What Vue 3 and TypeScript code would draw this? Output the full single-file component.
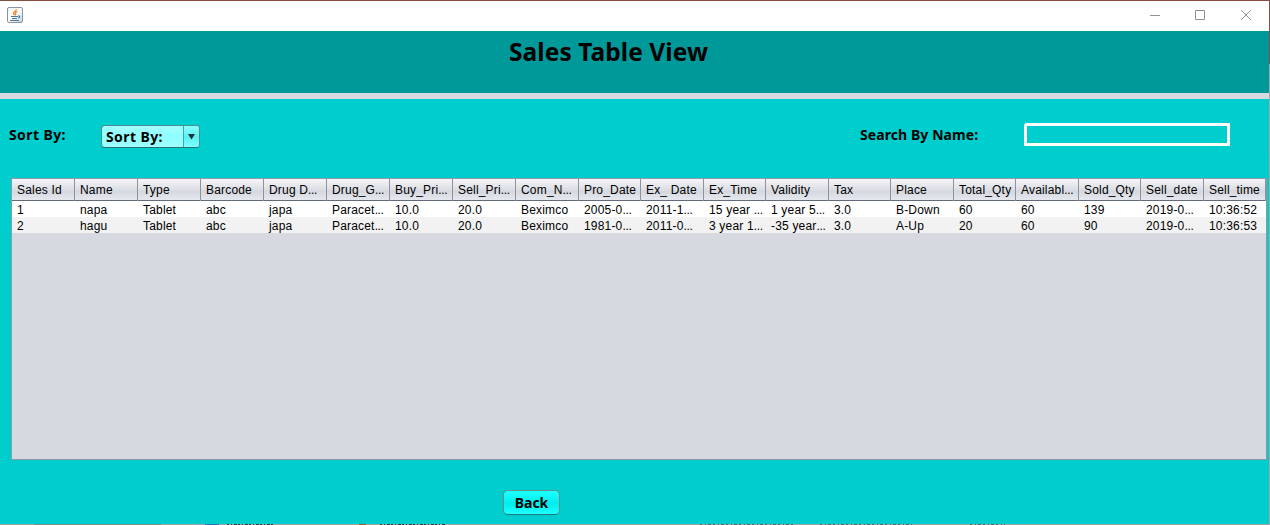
<script setup lang="ts">
interface Column {
  title: string
  width: number
  cells: [string, string]
}

const columns: Column[] = [
  { title: 'Sales Id', width: 63, cells: ['1', '2'] },
  { title: 'Name', width: 63, cells: ['napa', 'hagu'] },
  { title: 'Type', width: 63, cells: ['Tablet', 'Tablet'] },
  { title: 'Barcode', width: 63, cells: ['abc', 'abc'] },
  { title: 'Drug D...', width: 63, cells: ['japa', 'japa'] },
  { title: 'Drug_G...', width: 63, cells: ['Paracet...', 'Paracet...'] },
  { title: 'Buy_Pri...', width: 63, cells: ['10.0', '10.0'] },
  { title: 'Sell_Pri...', width: 63, cells: ['20.0', '20.0'] },
  { title: 'Com_N...', width: 63, cells: ['Beximco', 'Beximco'] },
  { title: 'Pro_Date', width: 62, cells: ['2005-0...', '1981-0...'] },
  { title: 'Ex_ Date', width: 63, cells: ['2011-1...', '2011-0...'] },
  { title: 'Ex_Time', width: 62, cells: ['15 year ...', '3 year 1...'] },
  { title: 'Validity', width: 63, cells: ['1 year 5...', '-35 year...'] },
  { title: 'Tax', width: 62, cells: ['3.0', '3.0'] },
  { title: 'Place', width: 63, cells: ['B-Down', 'A-Up'] },
  { title: 'Total_Qty', width: 62, cells: ['60', '20'] },
  { title: 'Availabl...', width: 63, cells: ['60', '60'] },
  { title: 'Sold_Qty', width: 62, cells: ['139', '90'] },
  { title: 'Sell_date', width: 63, cells: ['2019-0...', '2019-0...'] },
  { title: 'Sell_time', width: 62, cells: ['10:36:52', '10:36:53'] },
]

const tracks = columns.map((c) => `${c.width}px`).join(' ')

const stem = (text: string): string => text.replace(/\.\.\.$/, '')
const dots = (text: string): string => (text.endsWith('...') ? '...' : '')
</script>

<template>
  <div class="window">
    <header class="titlebar">
      <svg class="java" width="16" height="16" viewBox="0 0 16 16">
        <defs>
          <linearGradient id="tile" x1="0" y1="0" x2="1" y2="1">
            <stop offset="0" stop-color="#f2f5f7" />
            <stop offset=".5" stop-color="#fff" />
            <stop offset="1" stop-color="#c3ced6" />
          </linearGradient>
        </defs>
        <rect x=".5" y=".5" width="15" height="15" rx="1.5" fill="url(#tile)" stroke="#8296a5" />
        <path d="M9.200 2.300C9.800 4.200 6.200 4.700 6.500 6.400c.1.800.7 1.100 1 1.900M10.600 4.500C8.900 5 8 5.800 8.600 6.800c.4.700.2 1.100-.3 1.500" fill="none" stroke="#ec8426" stroke-width="1.300" />
        <path d="M4 9.500h7M5 11.500h5M3 13.500h9M11 9c2.300-.4 2.300 1.600.2 2" fill="none" stroke="#4c7593" stroke-width="1.100" />
      </svg>
      <svg class="controls" width="102" height="12" viewBox="0 0 102 12" fill="none" stroke="#929292">
        <path d="M0 6.500h10M45.500 1.500h9v9h-9z" />
        <path d="M91 1l10 10M101 1L91 11" />
      </svg>
    </header>
    <div class="banner"><h1>Sales Table View</h1></div>
    <div class="divider"></div>
    <main class="content">
      <div class="filters">
        <span class="label sort">Sort By:</span>
        <div class="combo">
          <span class="value">Sort By:</span>
          <span class="arrow"><svg width="7" height="6" viewBox="0 0 7 6"><path d="M0 0h7L3.500 5.500z" fill="#173238" /></svg></span>
        </div>
        <span class="label search">Search By Name:</span>
        <input class="field" type="text" />
      </div>
      <div class="table">
        <div class="row head" :style="{ gridTemplateColumns: tracks }">
          <span v-for="c in columns" :key="c.title">{{ stem(c.title) }}<i>{{ dots(c.title) }}</i></span>
        </div>
        <div v-for="r in [0, 1]" :key="r" class="row body" :style="{ gridTemplateColumns: tracks }">
          <span v-for="c in columns" :key="c.title">{{ stem(c.cells[r]) }}<i>{{ dots(c.cells[r]) }}</i></span>
        </div>
      </div>
      <button class="back">Back</button>
    </main>
    <svg class="edge" width="1270" height="1" viewBox="0 0 1270 1" stroke-width="1">
      <path d="M34 .5h127" stroke="#858a88" />
      <path d="M205 .5h14" stroke="#2377ae" />
      <path d="M359 .5h7" stroke="#a5533c" />
      <path d="M227 .5h48M380 .5h66" stroke="#35383a" stroke-dasharray="2 2 1 2 3 1" />
      <path d="M700 .5h96M820 .5h92M970 .5h35" stroke="#4f6264" stroke-dasharray="2 3 1 2 3 2" />
    </svg>
  </div>
</template>

<style>
body {
  margin: 0;
  overflow: hidden;
}
</style>

<style scoped>
.window {
  position: relative;
  box-sizing: border-box;
  width: 1270px;
  height: 525px;
  border-top: 1px solid #8a5145;
  border-right: 1px solid #9b9c9b;
  border-bottom: 1px solid #a5a5a3;
  border-image: linear-gradient(#884e42 0 64px, #9eaaad 64px 150px, #a5a5a3 150px) 1;
  border-left: 0;
  background: #00cdcd;
  font-family: "Noto Sans", sans-serif;
  color: #000;
}
.titlebar {
  display: flex;
  justify-content: space-between;
  height: 30px;
  background: #fff;
}
.java {
  margin: 6px 0 0 7px;
}
.controls {
  margin: 8px 17px 0 0;
}
.banner {
  height: 62px;
  background: #009999;
}
h1 {
  margin: 0;
  padding: 4px 0 0 509px;
  font-size: 24.5px;
  line-height: 34px;
  font-weight: 700;
  letter-spacing: 0.08px;
  white-space: nowrap;
}
.divider {
  height: 6px;
  background: #d6d9e0;
}
.filters {
  display: flex;
  align-items: flex-start;
  height: 79px;
}
.label {
  padding-top: 26px;
  font-size: 14px;
  font-weight: 700;
  line-height: 20px;
  white-space: nowrap;
}
.sort {
  width: 92px;
  box-sizing: border-box;
  padding-left: 9px;
  margin-right: 9px;
  letter-spacing: 0.4px;
}
.combo {
  box-sizing: border-box;
  display: flex;
  width: 99px;
  height: 23px;
  margin-top: 26px;
  border: 1px solid #4c8f93;
  border-bottom-color: #286e73;
  border-radius: 4px;
  background: linear-gradient(#a5ffff, #8effff 50%, #a0ffff);
  font-size: 14px;
  font-weight: 700;
  line-height: 22px;
  letter-spacing: 0.4px;
  overflow: hidden;
}
.value {
  flex: 1;
  padding-left: 4px;
  white-space: nowrap;
}
.arrow {
  display: flex;
  align-items: center;
  justify-content: center;
  width: 15px;
  border-left: 1px solid #3fa6a9;
  background: linear-gradient(#8cffff, #5cf0f2 50%, #80ffff);
}
.search {
  margin-left: 660px;
  width: 164px;
  letter-spacing: 0.08px;
}
.field {
  box-sizing: border-box;
  width: 206px;
  height: 23px;
  margin-top: 24px;
  border: 3px solid #fff;
  border-radius: 3px 1px 1px 1px;
  background: #00cdcd;
  outline: none;
}
.table {
  box-sizing: border-box;
  width: 1256px;
  height: 282px;
  margin-left: 11px;
  border: 1px solid #9297a1;
  background: #d6d9e0;
  font: 12px/16px "Liberation Sans", Arial, sans-serif;
  letter-spacing: 0.18px;
  overflow: hidden;
}
.row {
  display: grid;
}
.row span {
  padding-left: 5px;
  white-space: pre;
}
.row i {
  font-style: normal;
  letter-spacing: -0.35px;
}
.head {
  height: 21px;
  border-bottom: 1px solid #626b77;
  background: linear-gradient(#f4f5f7, #dfe1e7 45%, #d5d8df 60%, #e5e8ee);
  line-height: 22px;
}
.head span {
  border-right: 1px solid #8d929b;
}
.body {
  height: 16px;
  background: #fff;
  line-height: 18px;
}
.body:last-child {
  background: #f2f2f2;
}
.back {
  display: block;
  box-sizing: border-box;
  width: 57px;
  height: 25px;
  margin: 30px 0 0 503px;
  padding: 0;
  border: 1px solid #658e91;
  border-bottom-color: #23777b;
  border-radius: 5px;
  background: linear-gradient(#1fffff, #00eded 55%, #1fffff);
  font: 700 14px/22px "Noto Sans", sans-serif;
  color: #000;
}
.edge {
  position: absolute;
  left: 0;
  bottom: -1px;
}
</style>
